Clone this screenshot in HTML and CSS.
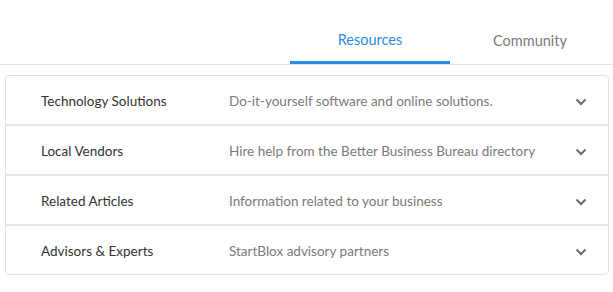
FILE: index.html
```html
<!DOCTYPE html>
<html lang="en">
<head>
  <meta charset="UTF-8">
  <meta name="viewport" content="width=device-width, initial-scale=1.0">
  <title>Resources</title>
  <link rel="stylesheet" href="styles.css">
</head>
<body>

  <!-- Tabs -->
  <div class="tabs">
    <div class="tab active">Resources</div>
    <div class="tab">Community</div>
  </div>

  <!-- Resource list -->
  <div class="list">
    <div class="row">
      <div class="title">Technology Solutions</div>
      <div class="desc">Do-it-yourself software and online solutions.</div>
      <svg class="chevron" width="12" height="8" viewBox="0 0 12 8"><path d="M1.5 1.5 L6 6 L10.5 1.5" fill="none" stroke="#6b6b6b" stroke-width="2"/></svg>
    </div>
    <div class="row">
      <div class="title">Local Vendors</div>
      <div class="desc">Hire help from the Better Business Bureau directory</div>
      <svg class="chevron" width="12" height="8" viewBox="0 0 12 8"><path d="M1.5 1.5 L6 6 L10.5 1.5" fill="none" stroke="#6b6b6b" stroke-width="2"/></svg>
    </div>
    <div class="row">
      <div class="title">Related Articles</div>
      <div class="desc">Information related to your business</div>
      <svg class="chevron" width="12" height="8" viewBox="0 0 12 8"><path d="M1.5 1.5 L6 6 L10.5 1.5" fill="none" stroke="#6b6b6b" stroke-width="2"/></svg>
    </div>
    <div class="row">
      <div class="title">Advisors &amp; Experts</div>
      <div class="desc">StartBlox advisory partners</div>
      <svg class="chevron" width="12" height="8" viewBox="0 0 12 8"><path d="M1.5 1.5 L6 6 L10.5 1.5" fill="none" stroke="#6b6b6b" stroke-width="2"/></svg>
    </div>
  </div>

</body>
</html>
```

FILE: styles.css
```css
body {
  font-family: Lato, "Liberation Sans", sans-serif;
  background-color: white;
  margin: 0;
}
.tabs {
  display: flex;
  justify-content: flex-end;
  padding: 18px 3px 0 0;
  border-bottom: 1px solid #e2e2e2;
}
.tab {
  width: 160px;
  height: 46px;
  box-sizing: border-box;
  text-align: center;
  font-size: 14.5px;
  line-height: 45px;
  color: #7a7a7a;
}
.tab.active {
  color: #2b8ce8;
  border-bottom: 3px solid #2b8ce8;
  line-height: 43px;
  margin-bottom: -1px;
}
.list {
  margin: 10px 4px 0 5px;
  border: 1px solid #e2e2e2;
  border-radius: 4px;
}
.row {
  display: flex;
  align-items: center;
  height: 48px;
  box-sizing: border-box;
  padding: 1px 21px 0 35px;
  font-size: 13.5px;
}
.row + .row {
  border-top: 2px solid #e6e6e6;
  height: 50px;
}
.title {
  width: 188px;
  color: #333;
}
.desc {
  flex: 1;
  color: #7a7a7a;
}
.chevron {
  margin-top: 3px;
}
```
